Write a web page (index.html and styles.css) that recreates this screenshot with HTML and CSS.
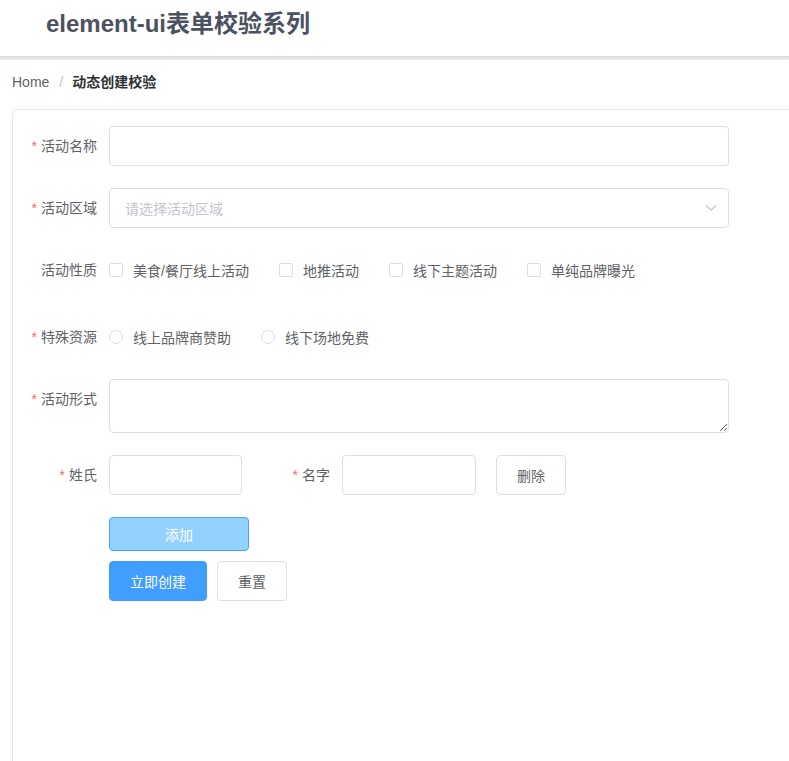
FILE: index.html
```html
<!DOCTYPE html>
<html lang="zh-CN">
<head>
<meta charset="utf-8">
<title>element-ui表单校验系列</title>
<link rel="stylesheet" href="styles.css">
</head>
<body>
<div class="page">
  <header class="header">
    <h1 class="title">element-ui表单校验系列</h1>
  </header>
  <div class="header-shadow"></div>
  <nav class="breadcrumb">
    <span class="crumb">Home</span>
    <span class="sep">/</span>
    <span class="crumb current">动态创建校验</span>
  </nav>
  <div class="panel">
    <form class="form">
      <div class="item">
        <label class="label"><span class="star">*</span>活动名称</label>
        <div class="control"><input class="input" type="text"></div>
      </div>
      <div class="item">
        <label class="label"><span class="star">*</span>活动区域</label>
        <div class="control">
          <div class="select">
            <span class="placeholder">请选择活动区域</span>
            <svg class="arrow" width="12" height="8" viewBox="0 0 12 8"><path d="M1 1.5 L6 6 L11 1.5" fill="none" stroke="#c0c4cc" stroke-width="1.2"/></svg>
          </div>
        </div>
      </div>
      <div class="item item-check">
        <label class="label">活动性质</label>
        <div class="control group">
          <span class="check"><span class="box"></span><span class="text">美食/餐厅线上活动</span></span>
          <span class="check"><span class="box"></span><span class="text">地推活动</span></span>
          <span class="check"><span class="box"></span><span class="text">线下主题活动</span></span>
          <span class="check"><span class="box"></span><span class="text">单纯品牌曝光</span></span>
        </div>
      </div>
      <div class="item">
        <label class="label"><span class="star">*</span>特殊资源</label>
        <div class="control group">
          <span class="check"><span class="radio"></span><span class="text">线上品牌商赞助</span></span>
          <span class="check"><span class="radio"></span><span class="text">线下场地免费</span></span>
        </div>
      </div>
      <div class="item">
        <label class="label"><span class="star">*</span>活动形式</label>
        <div class="control"><textarea class="textarea"></textarea></div>
      </div>
      <div class="item name-row">
        <label class="label"><span class="star">*</span>姓氏</label>
        <input class="input input-first" type="text">
        <label class="label label-second"><span class="star">*</span>名字</label>
        <input class="input input-second" type="text">
        <button type="button" class="btn btn-plain btn-del">删除</button>
      </div>
      <div class="actions">
        <button type="button" class="btn btn-light">添加</button>
        <div class="actions-row">
          <button type="button" class="btn btn-primary">立即创建</button>
          <button type="button" class="btn btn-plain">重置</button>
        </div>
      </div>
    </form>
  </div>
</div>
</body>
</html>
```

FILE: styles.css
```css
* { box-sizing: border-box; }
html, body { margin: 0; padding: 0; background: #fff; }
body {
  font-family: "Liberation Sans", "Noto Sans CJK SC", sans-serif;
  font-size: 14px;
  color: #606266;
  overflow: hidden;
}
.page { width: 789px; height: 761px; overflow: hidden; }
.header { height: 56px; padding-left: 46px; }
.title {
  margin: 0;
  padding-top: 6px;
  font-size: 24px;
  line-height: 36px;
  font-weight: bold;
  color: #4c5262;
}
.header-shadow {
  height: 4px;
  background: linear-gradient(#d9dbe0, #eceef1);
}
.breadcrumb {
  display: flex;
  padding: 15px 12px 0 12px;
  height: 49px;
  line-height: 14px;
  font-size: 14px;
}
.crumb { color: #606266; }
.crumb.current { color: #303133; font-weight: bold; }
.sep { color: #c0c4cc; margin: 0 9px 0 10px; }
.panel {
  margin-left: 12px;
  width: 820px;
  height: 700px;
  border: 1px solid #e4e7ed;
  border-radius: 4px;
  padding-top: 16px;
}
.item {
  display: flex;
  align-items: flex-start;
  margin-bottom: 22px;
}
.item-check { margin-bottom: 27px; }
.label {
  width: 96px;
  flex: none;
  text-align: right;
  padding-right: 12px;
  line-height: 40px;
  color: #606266;
}
.star { color: #f56c6c; margin-right: 4px; }
.control { width: 620px; }
.input {
  display: block;
  width: 100%;
  height: 40px;
  border: 1px solid #dcdfe6;
  border-radius: 4px;
  padding: 0 15px;
  font: inherit;
  outline: none;
}
.select {
  height: 40px;
  border: 1px solid #dcdfe6;
  border-radius: 4px;
  padding: 0 15px;
  display: flex;
  align-items: center;
  justify-content: space-between;
}
.placeholder { color: #c0c4cc; }
.arrow { margin-right: -4px; }
.group {
  display: flex;
  align-items: center;
  height: 40px;
}
.check {
  display: inline-flex;
  align-items: center;
  margin-right: 30px;
  color: #606266;
}
.box {
  width: 14px;
  height: 14px;
  border: 1px solid #dcdfe6;
  border-radius: 2px;
  background: #fff;
}
.radio {
  width: 14px;
  height: 14px;
  border: 1px solid #dcdfe6;
  border-radius: 50%;
  background: #fff;
}
.text { padding-left: 10px; }
.textarea {
  display: block;
  width: 100%;
  height: 54px;
  border: 1px solid #dcdfe6;
  border-radius: 4px;
  padding: 5px 15px;
  font: inherit;
  resize: vertical;
  outline: none;
}
.name-row { align-items: center; }
.input-first { width: 133px; }
.label-second { margin-left: 4px; }
.input-second { width: 134px; }
.btn {
  font: inherit;
  font-size: 14px;
  border-radius: 4px;
  cursor: pointer;
  padding: 0;
}
.btn-plain {
  width: 70px;
  height: 40px;
  background: #fff;
  border: 1px solid #dcdfe6;
  color: #606266;
}
.btn-del { margin-left: 20px; }
.actions {
  padding-left: 96px;
  display: flex;
  flex-direction: column;
  gap: 10px;
}
.btn-light {
  width: 140px;
  height: 34px;
  background: #93d2ff;
  border: 1px solid #4aa3f7;
  color: #fff;
}
.actions-row { display: flex; gap: 10px; }
.btn-primary {
  width: 98px;
  height: 40px;
  background: #409eff;
  border: 1px solid #409eff;
  color: #fff;
}
```
